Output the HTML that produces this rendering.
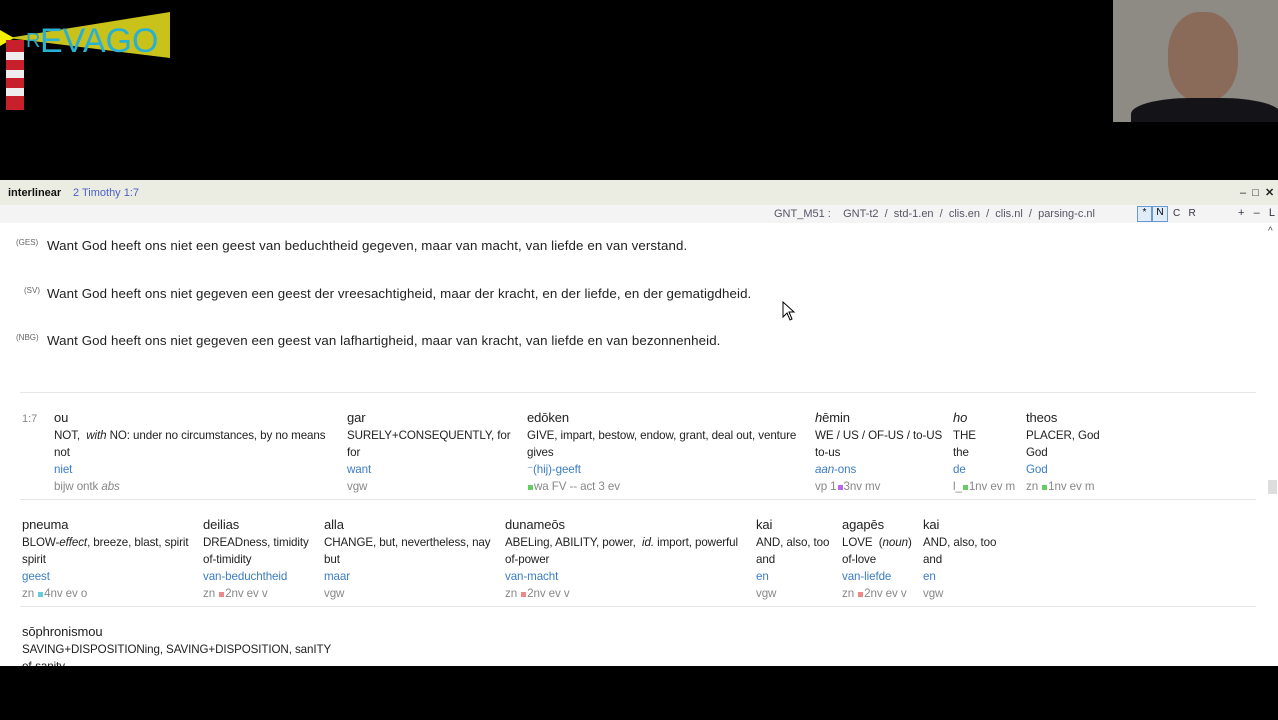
<!DOCTYPE html>
<html><head><meta charset="utf-8"><style>
body{margin:0;width:1278px;height:720px;background:#000;position:relative;overflow:hidden;font-family:"Liberation Sans",sans-serif}
.a{position:absolute;white-space:nowrap}
#win{position:absolute;left:0;top:180px;width:1278px;height:486px;background:#fff;overflow:hidden}
.title{position:absolute;left:0;top:0;width:1278px;height:25px;background:#ecede2}
.tb{position:absolute;left:0;top:25px;width:1278px;height:18px;background:#f4f4f4}
.v{font-size:13.3px;color:#222;letter-spacing:.1px}
.tag{font-size:8px;color:#666}
.w{position:absolute;white-space:nowrap;font-size:11.6px;line-height:17px;color:#222;letter-spacing:-.1px}
.w .g{font-size:13px;line-height:19px}
.w .b{color:#3c7dc4}
.w .p{color:#888}
.sq{display:inline-block;width:5px;height:5px;margin:0 1px}
.hr{position:absolute;left:20px;width:1236px;height:1px;background:#e6e6e6}
</style></head><body>
<svg class="a" style="left:0;top:0" width="180" height="115">
<polygon points="8,38 170,12 170,58" fill="#c8c21a"/>
<polygon points="0,30 14,38 0,46" fill="#f2f000"/>
<text x="26" y="47" font-family="Liberation Sans" font-size="20" fill="#2aa8c8">R</text>
<text x="40" y="52" font-family="Liberation Sans" font-size="34" fill="#2ab0d0">EVAGO</text>
<rect x="6" y="40" width="18" height="70" fill="#c8202a"/>
<rect x="6" y="52" width="18" height="8" fill="#eee"/><rect x="6" y="70" width="18" height="8" fill="#eee"/><rect x="6" y="88" width="18" height="8" fill="#eee"/>
</svg>
<div class="a" style="left:1113px;top:0;width:165px;height:122px;background:#8e8b84;overflow:hidden">
<div class="a" style="left:55px;top:12px;width:70px;height:90px;border-radius:45%;background:#8a6a58"></div>
<div class="a" style="left:18px;top:98px;width:150px;height:40px;border-radius:40% 40% 0 0;background:#141418"></div>
</div>
<div id="win">
<div class="title"></div>
<div class="a" style="left:8px;top:7px;font-size:11px;font-weight:bold;color:#111">interlinear</div>
<div class="a" style="left:73px;top:7px;font-size:11px;color:#4a5fc8">2 Timothy 1:7</div>
<div class="a" style="left:1240px;top:6px;font-size:11px;color:#222">–&nbsp;&nbsp;□&nbsp;&nbsp;<b>✕</b></div>
<div class="tb"></div>
<div class="a" style="left:774px;top:28px;font-size:11px;color:#556">GNT_M51 :&nbsp;&nbsp;&nbsp;&nbsp;GNT-t2&nbsp;&nbsp;/&nbsp;&nbsp;std-1.en&nbsp;&nbsp;/&nbsp;&nbsp;clis.en&nbsp;&nbsp;/&nbsp;&nbsp;clis.nl&nbsp;&nbsp;/&nbsp;&nbsp;parsing-c.nl</div>
<div class="a" style="left:1137px;top:26px;width:13px;height:14px;border:1px solid #6a9ad0;background:#e0ecf8;font-size:10px;text-align:center">*</div>
<div class="a" style="left:1152px;top:26px;width:14px;height:14px;border:1px solid #6a9ad0;background:#e0ecf8;font-size:10px;text-align:center">N</div>
<div class="a" style="left:1173px;top:28px;font-size:10px;color:#334">C&nbsp;&nbsp;&nbsp;R</div>
<div class="a" style="left:1238px;top:27px;font-size:11px;color:#334">+&nbsp;&nbsp;&nbsp;–&nbsp;&nbsp;&nbsp;L</div>
<div class="a" style="left:1268px;top:46px;font-size:10px;color:#444">^</div>
<div class="a" style="left:1268px;top:300px;width:9px;height:14px;background:#ddd"></div>

<div class="a tag" style="left:16px;top:58px">(GES)</div><div class="a v" style="left:47px;top:58px">Want God heeft ons niet een geest van beduchtheid gegeven, maar van macht, van liefde en van verstand.</div>
<div class="a tag" style="left:24px;top:106px">(SV)</div><div class="a v" style="left:47px;top:106px">Want God heeft ons niet gegeven een geest der vreesachtigheid, maar der kracht, en der liefde, en der gematigdheid.</div>
<div class="a tag" style="left:16px;top:153px">(NBG)</div><div class="a v" style="left:47px;top:153px">Want God heeft ons niet gegeven een geest van lafhartigheid, maar van kracht, van liefde en van bezonnenheid.</div>
<div class="hr" style="top:212px"></div>

<div class="a" style="left:22px;top:233px;font-size:11px;color:#888">1:7</div>
<div class="w" style="left:54px;top:228px"><div class="g">ou</div>NOT,&nbsp; <i>with</i> NO: under no circumstances, by no means<br>not<div class="b">niet</div><div class="p">bijw ontk <i>abs</i></div></div>
<div class="w" style="left:347px;top:228px"><div class="g">gar</div>SURELY+CONSEQUENTLY, for<br>for<div class="b">want</div><div class="p">vgw</div></div>
<div class="w" style="left:527px;top:228px"><div class="g">edōken</div>GIVE, impart, bestow, endow, grant, deal out, venture<br>gives<div class="b">⁻(hij)-geeft</div><div class="p"><span class="sq" style="background:#6c6"></span>wa FV -- act 3 ev</div></div>
<div class="w" style="left:815px;top:228px"><div class="g"><i>h</i>ēmin</div>WE / US / OF-US / to-US<br>to-us<div class="b"><i>aan</i>-ons</div><div class="p">vp 1<span class="sq" style="background:#b6e"></span>3nv mv</div></div>
<div class="w" style="left:953px;top:228px"><div class="g"><i>ho</i></div>THE<br>the<div class="b">de</div><div class="p">l_<span class="sq" style="background:#6c6"></span>1nv ev m</div></div>
<div class="w" style="left:1026px;top:228px"><div class="g">theos</div>PLACER, God<br>God<div class="b">God</div><div class="p">zn <span class="sq" style="background:#6c6"></span>1nv ev m</div></div>
<div class="hr" style="top:319px"></div>

<div class="w" style="left:22px;top:335px"><div class="g">pneuma</div>BLOW-<i>effect</i>, breeze, blast, spirit<br>spirit<div class="b">geest</div><div class="p">zn <span class="sq" style="background:#6cd"></span>4nv ev o</div></div>
<div class="w" style="left:203px;top:335px"><div class="g">deilias</div>DREADness, timidity<br>of-timidity<div class="b">van-beduchtheid</div><div class="p">zn <span class="sq" style="background:#e88"></span>2nv ev v</div></div>
<div class="w" style="left:324px;top:335px"><div class="g">alla</div>CHANGE, but, nevertheless, nay<br>but<div class="b">maar</div><div class="p">vgw</div></div>
<div class="w" style="left:505px;top:335px"><div class="g">dunameōs</div>ABELing, ABILITY, power,&nbsp; <i>id.</i> import, powerful<br>of-power<div class="b">van-macht</div><div class="p">zn <span class="sq" style="background:#e88"></span>2nv ev v</div></div>
<div class="w" style="left:756px;top:335px"><div class="g">kai</div>AND, also, too<br>and<div class="b">en</div><div class="p">vgw</div></div>
<div class="w" style="left:842px;top:335px"><div class="g">agapēs</div>LOVE&nbsp; (<i>noun</i>)<br>of-love<div class="b">van-liefde</div><div class="p">zn <span class="sq" style="background:#e88"></span>2nv ev v</div></div>
<div class="w" style="left:923px;top:335px"><div class="g">kai</div>AND, also, too<br>and<div class="b">en</div><div class="p">vgw</div></div>
<div class="hr" style="top:426px"></div>

<div class="w" style="left:22px;top:442px"><div class="g">sōphronismou</div>SAVING+DISPOSITIONing, SAVING+DISPOSITION, sanITY<br>of-sanity</div>
</div>
<svg class="a" style="left:782px;top:301px" width="14" height="20"><path d="M1,1 L1,16 L5,12 L8,19 L10,18 L7,11 L12,11 Z" fill="#fff" stroke="#000"/></svg>
</body></html>
